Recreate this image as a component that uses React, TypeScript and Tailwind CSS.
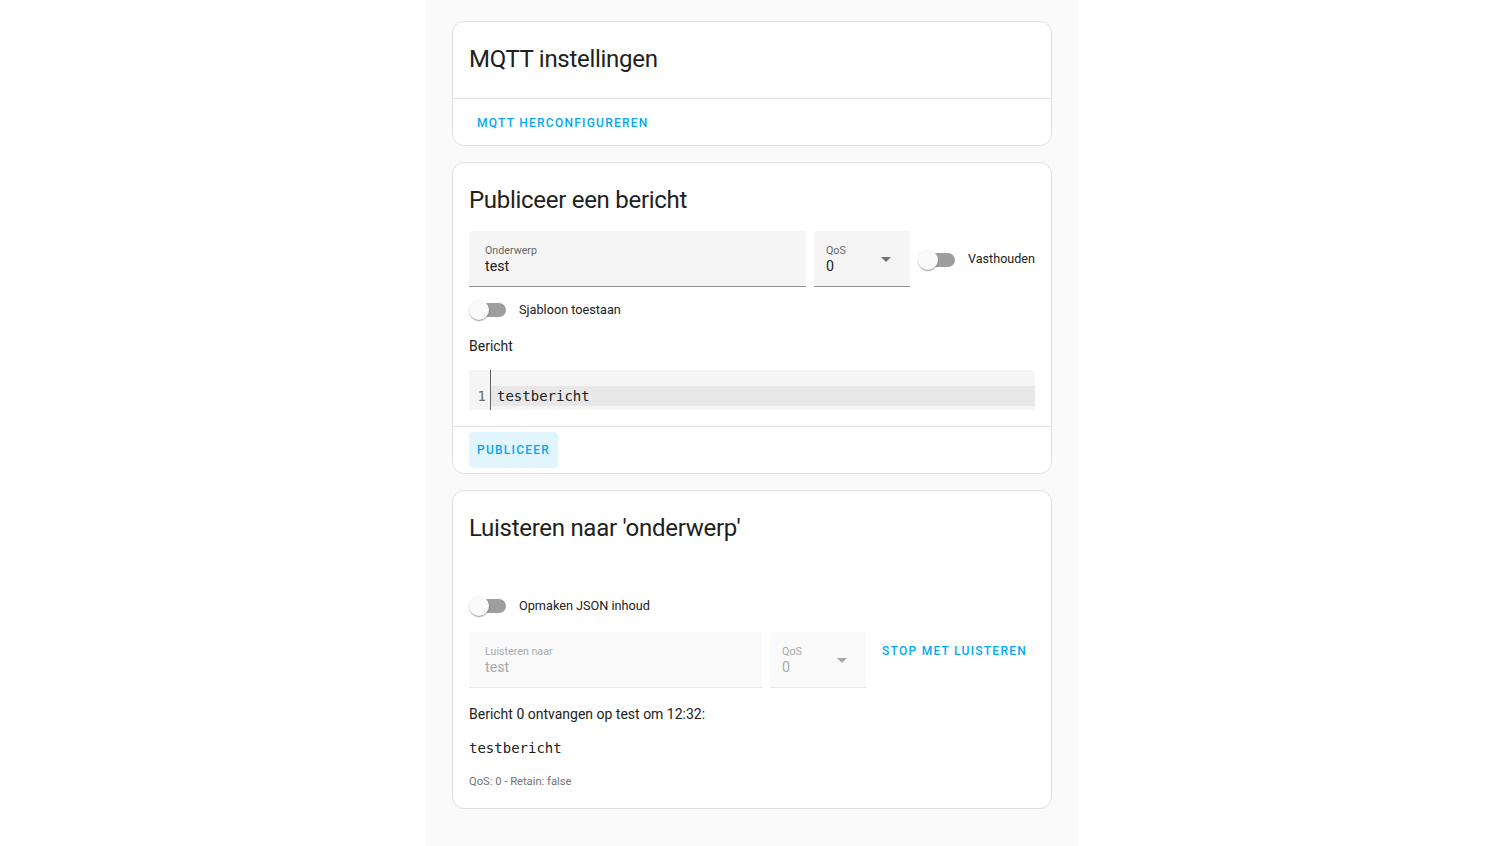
import React from "react";

function Switch() {
  return (
    <div className="relative w-[37px] h-[20px] shrink-0">
      <div className="absolute left-[3px] top-[3px] w-[34px] h-[14px] rounded-full bg-[#9e9e9e]" />
      <div className="absolute left-0 top-0 w-[20px] h-[20px] rounded-full bg-[#fafafa] shadow-[0_2px_1px_-1px_rgba(0,0,0,0.2),0_1px_1px_0_rgba(0,0,0,0.14),0_1px_3px_0_rgba(0,0,0,0.12)]" />
    </div>
  );
}

function Arrow({ color }: { color: string }) {
  return (
    <svg width="10" height="5" viewBox="0 0 10 5" className="absolute right-[19px] top-[26px]">
      <path d="M0 0 L10 0 L5 5 Z" fill={color} />
    </svg>
  );
}

function Field({ label, value, disabled, className = "" }: { label: string; value: string; disabled?: boolean; className?: string }) {
  return (
    <div
      className={
        "relative h-[56px] rounded-t-[4px] border-b px-4 pt-[13px] flex flex-col " +
        (disabled ? "bg-[#fafafa] border-[#e8e8e8] " : "bg-[#f5f5f5] border-[#949494] ") +
        className
      }
    >
      <div className={"text-[10.7px] leading-[14px] " + (disabled ? "text-[#a8a8a8]" : "text-[#666666]")}>{label}</div>
      <div className={"text-[14.2px] leading-[16px] " + (disabled ? "text-[#a8a8a8]" : "text-[#212121]")}>{value}</div>
    </div>
  );
}

function Select({ value, disabled, className = "" }: { value: string; disabled?: boolean; className?: string }) {
  return (
    <div
      className={
        "relative h-[56px] w-[96px] shrink-0 rounded-t-[4px] border-b pl-3 pt-[13px] flex flex-col " +
        (disabled ? "bg-[#fafafa] border-[#e8e8e8] " : "bg-[#f5f5f5] border-[#949494] ") +
        className
      }
    >
      <div className={"text-[10.7px] leading-[14px] " + (disabled ? "text-[#a8a8a8]" : "text-[#666666]")}>QoS</div>
      <div className={"text-[14.2px] leading-[16px] " + (disabled ? "text-[#a8a8a8]" : "text-[#212121]")}>{value}</div>
      <Arrow color={disabled ? "#a8a8a8" : "#737373"} />
    </div>
  );
}

function Card({ children }: { children: React.ReactNode }) {
  return <div className="w-[600px] rounded-[12px] border border-[#e0e0e0] bg-white">{children}</div>;
}

function Title({ children, pb }: { children: React.ReactNode; pb: string }) {
  return (
    <div className={"px-4 pt-[13px] text-[24px] leading-[48px] tracking-[-0.012em] text-[#212121] " + pb}>{children}</div>
  );
}

function TextButton({ children, filled }: { children: React.ReactNode; filled?: boolean }) {
  return (
    <div
      className={
        "h-9 px-2 inline-flex items-center rounded-[4px] text-[12px] font-medium uppercase tracking-[1.25px] text-[#03a9f4] " +
        (filled ? "bg-[#e1f5fe]" : "")
      }
    >
      {children}
    </div>
  );
}

export default function App() {
  return (
    <div className="min-h-screen bg-white flex justify-center" style={{ fontFamily: "Roboto, 'Noto Sans', sans-serif" }}>
      <div className="w-[652px] min-h-[846px] bg-[#fafafa] flex flex-col items-center pt-[21px] gap-4 pb-8">
        <Card>
          <Title pb="pb-[15px]">MQTT instellingen</Title>
          <div className="border-t border-[#e0e0e0] px-4 pt-[6px] pb-[4px] flex">
            <TextButton>MQTT herconfigureren</TextButton>
          </div>
        </Card>

        <Card>
          <Title pb="pb-[7px]">Publiceer een bericht</Title>
          <div className="px-4 pb-4">
            <div className="flex items-center gap-2">
              <Field label="Onderwerp" value="test" className="flex-1" />
              <Select value="0" />
              <div className="flex items-center pt-[1px]">
                <Switch />
                <span className="ml-[13px] text-[12.6px] text-[#212121]">Vasthouden</span>
              </div>
            </div>
            <div className="mt-[3px] h-[40px] flex items-center">
              <Switch />
              <span className="ml-[13px] text-[12.7px] text-[#212121]">Sjabloon toestaan</span>
            </div>
            <div className="mt-[4px] text-[14px] leading-6 text-[#212121]">Bericht</div>
            <div className="mt-3 h-[40px] bg-[#f5f5f5] rounded-tr-[4px] flex" style={{ fontFamily: "'DejaVu Sans Mono', monospace" }}>
              <div className="w-[22px] border-r border-[#5f5f5f] pt-4 text-right pr-[4px] text-[14px] leading-5 text-[#6d6d6d]">1</div>
              <div className="flex-1 pt-4">
                <div className="h-5 bg-[#e8e8e8] pl-[6px] text-[14px] leading-5 text-[#212121]">testbericht</div>
              </div>
            </div>
          </div>
          <div className="border-t border-[#e0e0e0] px-4 py-[5px] flex">
            <TextButton filled>Publiceer</TextButton>
          </div>
        </Card>

        <Card>
          <Title pb="pb-[7px]">Luisteren naar 'onderwerp'</Title>
          <div className="px-4 pb-4">
            <div className="mt-[27px] h-[40px] flex items-center">
              <Switch />
              <span className="ml-[13px] text-[12.7px] text-[#212121]">Opmaken JSON inhoud</span>
            </div>
            <div className="mt-[6px] flex items-start gap-2">
              <Field label="Luisteren naar" value="test" disabled className="flex-1" />
              <Select value="0" disabled />
              <div className="mt-[1px]">
                <TextButton>Stop met luisteren</TextButton>
              </div>
            </div>
            <div className="mt-[14px] text-[14px] leading-6 text-[#212121]">Bericht 0 ontvangen op test om 12:32:</div>
            <div className="mt-3 text-[14px] leading-5 text-[#212121]" style={{ fontFamily: "'DejaVu Sans Mono', monospace" }}>
              testbericht
            </div>
            <div className="mt-[14px] text-[11.2px] leading-5 text-[#727272]">QoS: 0 - Retain: false</div>
          </div>
        </Card>
      </div>
    </div>
  );
}
